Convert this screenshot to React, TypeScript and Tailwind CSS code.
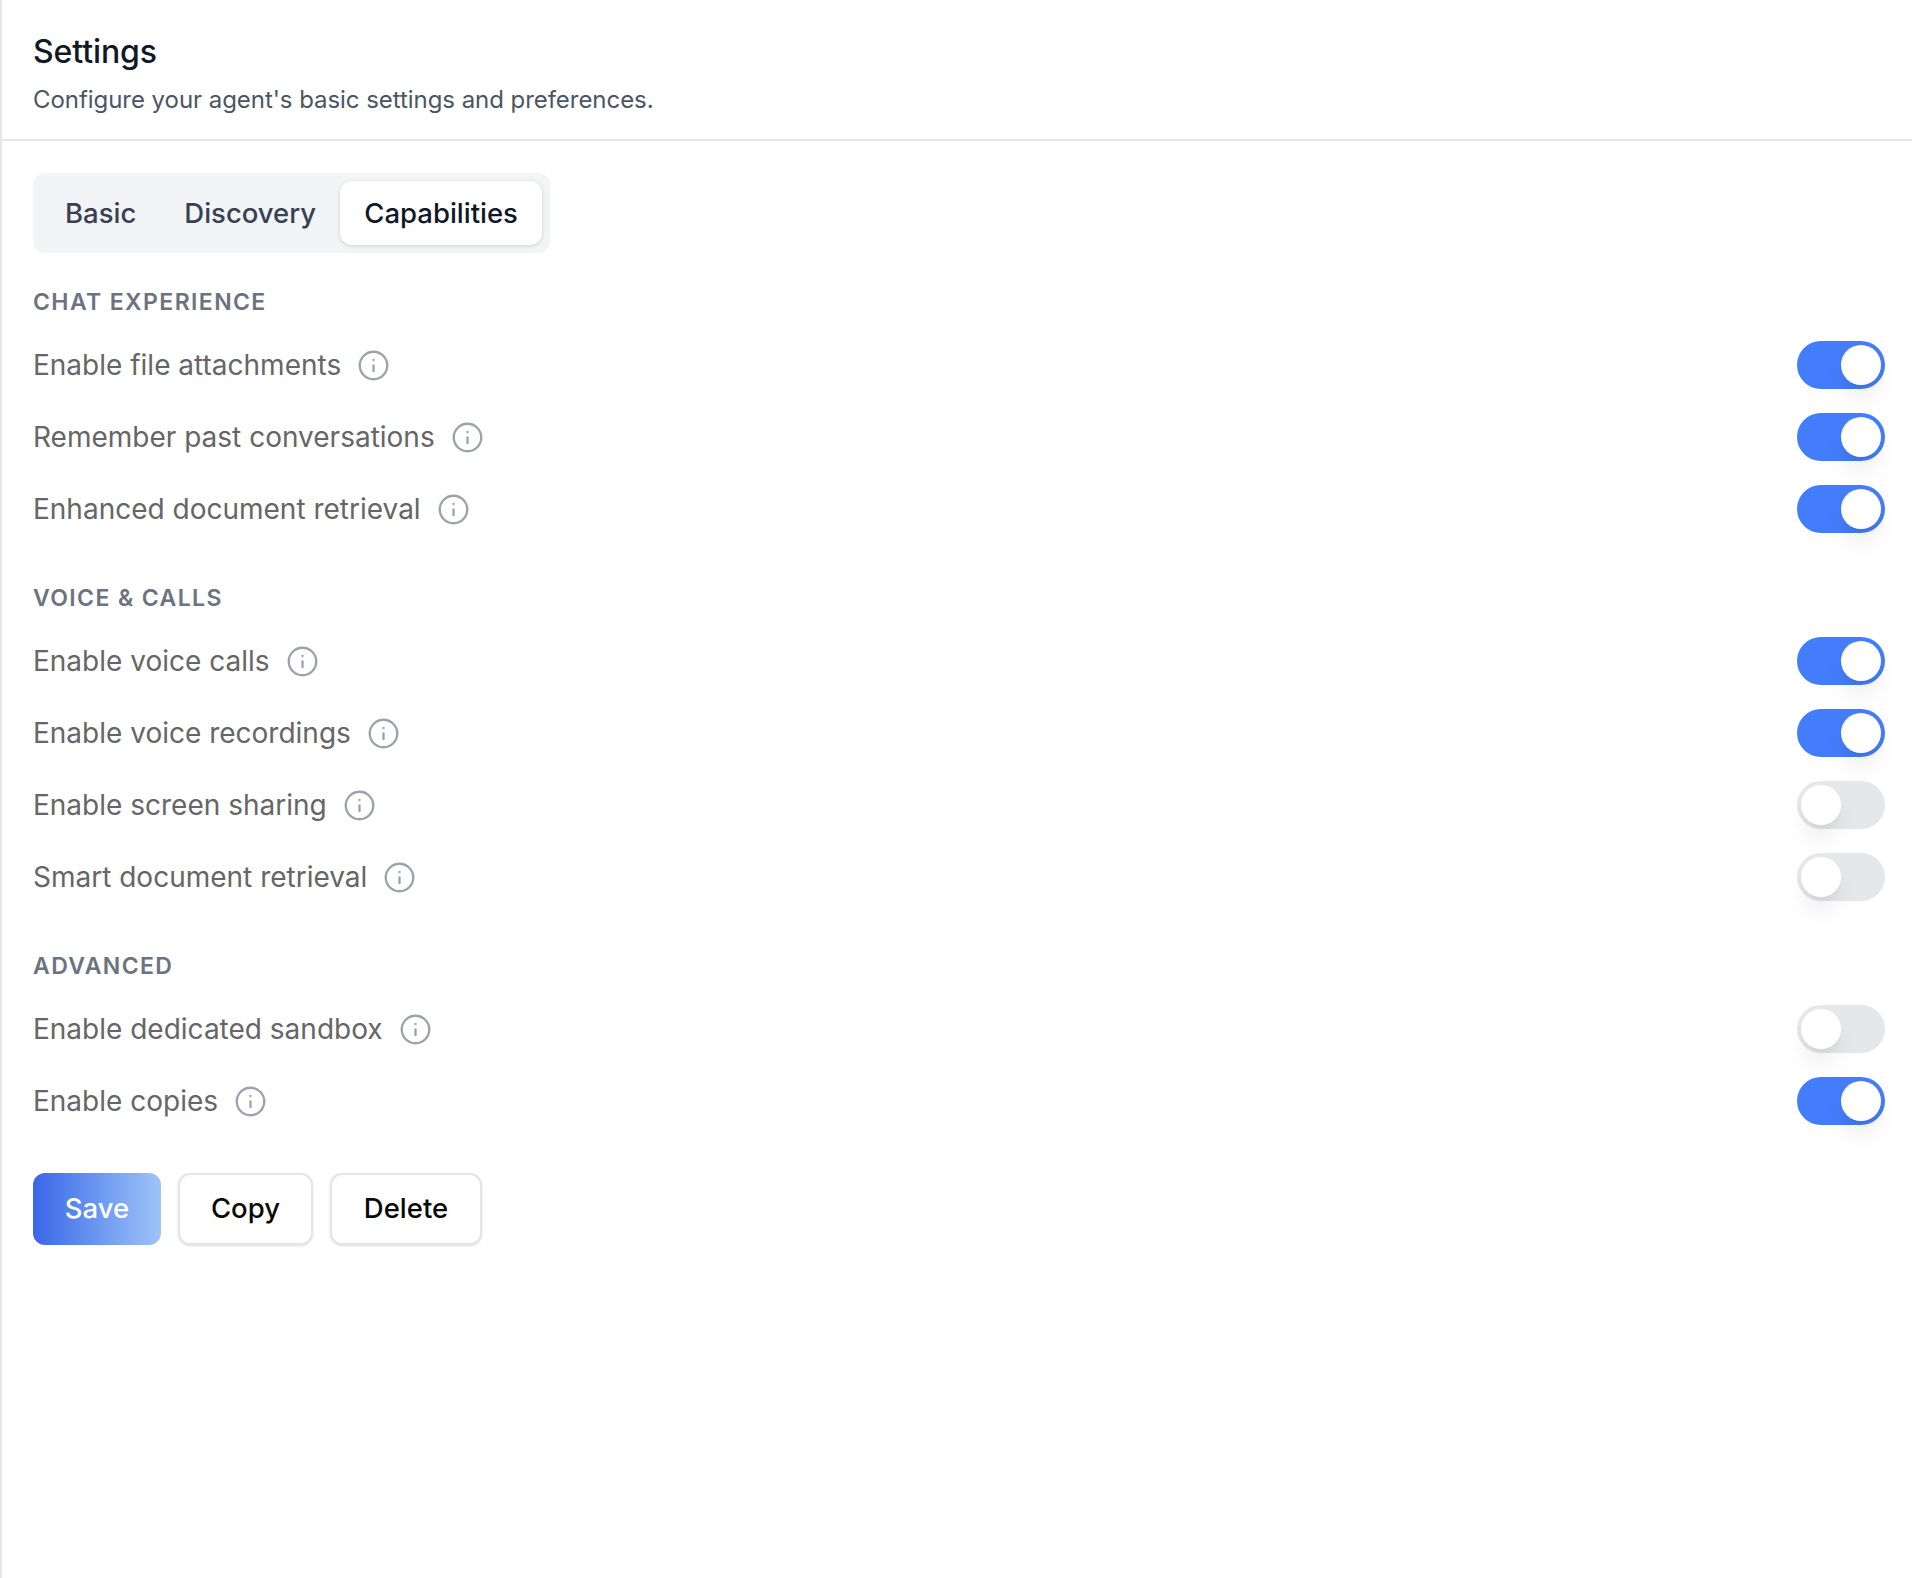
import React from "react";
import { Info } from "lucide-react";

function Toggle({ on }: { on: boolean }) {
  return (
    <div
      className={`flex h-12 w-[88px] shrink-0 items-center rounded-full p-1 ${
        on ? "justify-end bg-[#437dfb]" : "justify-start bg-[#e5e7eb]"
      }`}
    >
      <div className="h-10 w-10 rounded-full bg-white shadow-[0_16px_24px_-5px_rgba(0,0,0,0.1),0_6px_10px_-6px_rgba(0,0,0,0.08)]" />
    </div>
  );
}

function Row({ label, on }: { label: string; on: boolean }) {
  return (
    <div className="flex h-12 items-center justify-between">
      <div className="flex items-center gap-4">
        <span className="text-[28px] leading-[48px] text-[#666666]">{label}</span>
        <Info className="h-[33px] w-[33px] text-[#9ca3af]" strokeWidth={1.7} />
      </div>
      <Toggle on={on} />
    </div>
  );
}

function Section({ title, rows }: { title: string; rows: [string, boolean][] }) {
  return (
    <section className="flex flex-col gap-6">
      <h3 className="h-8 text-[23px] font-semibold uppercase leading-[34px] tracking-[1.4px] text-[#6b7280]">
        {title}
      </h3>
      {rows.map(([label, on]) => (
        <Row key={label} label={label} on={on} />
      ))}
    </section>
  );
}

export default function App() {
  return (
    <div className="min-h-[1578px] border-l-2 border-[#e5e7eb] bg-white font-['Inter',sans-serif] antialiased">
      <header className="h-[141px] border-b-2 border-[#e5e7eb] pl-[31px] pt-[33px]">
        <h1 className="text-[32px] font-medium leading-[38px] tracking-[-0.1px] text-[#111827]">Settings</h1>
        <p className="mt-[10px] text-[24px] leading-[38px] tracking-[-0.05px] text-[#4b5563]">
          Configure your agent's basic settings and preferences.
        </p>
      </header>
      <main className="flex flex-col gap-12 pl-[31px] pr-[27px] pt-8">
        <div className="flex flex-col gap-8">
          <div className="flex h-20 w-[517px] items-center rounded-xl bg-[#f3f4f6] p-2">
            <button className="h-16 px-6 pt-[2px] text-[27.5px] font-[450] text-[#374151]">Basic</button>
            <button className="h-16 px-6 pt-[2px] text-[27.5px] font-[450] text-[#374151]">Discovery</button>
            <button className="h-16 w-[204px] rounded-xl bg-white pt-[2px] text-[27.5px] font-[450] text-[#111827] shadow-[0_1px_4px_rgba(0,0,0,0.15)]">
              Capabilities
            </button>
          </div>
          <Section
            title="Chat Experience"
            rows={[
              ["Enable file attachments", true],
              ["Remember past conversations", true],
              ["Enhanced document retrieval", true],
            ]}
          />
        </div>
        <Section
          title="Voice & Calls"
          rows={[
            ["Enable voice calls", true],
            ["Enable voice recordings", true],
            ["Enable screen sharing", false],
            ["Smart document retrieval", false],
          ]}
        />
        <Section
          title="Advanced"
          rows={[
            ["Enable dedicated sandbox", false],
            ["Enable copies", true],
          ]}
        />
        <div className="flex gap-[17px]">
          <button className="h-[72px] w-32 rounded-xl bg-gradient-to-r from-[#3b66e6] to-[#9fc4f8] text-[27.5px] font-[450] text-white">
            Save
          </button>
          <button className="h-[72px] w-[135px] rounded-xl border-2 border-[#e5e5e5] bg-white text-[27.5px] font-[450] text-[#0a0a0a] shadow-sm">
            Copy
          </button>
          <button className="h-[72px] w-[152px] rounded-xl border-2 border-[#e5e5e5] bg-white text-[27.5px] font-[450] text-[#0a0a0a] shadow-sm">
            Delete
          </button>
        </div>
      </main>
    </div>
  );
}
